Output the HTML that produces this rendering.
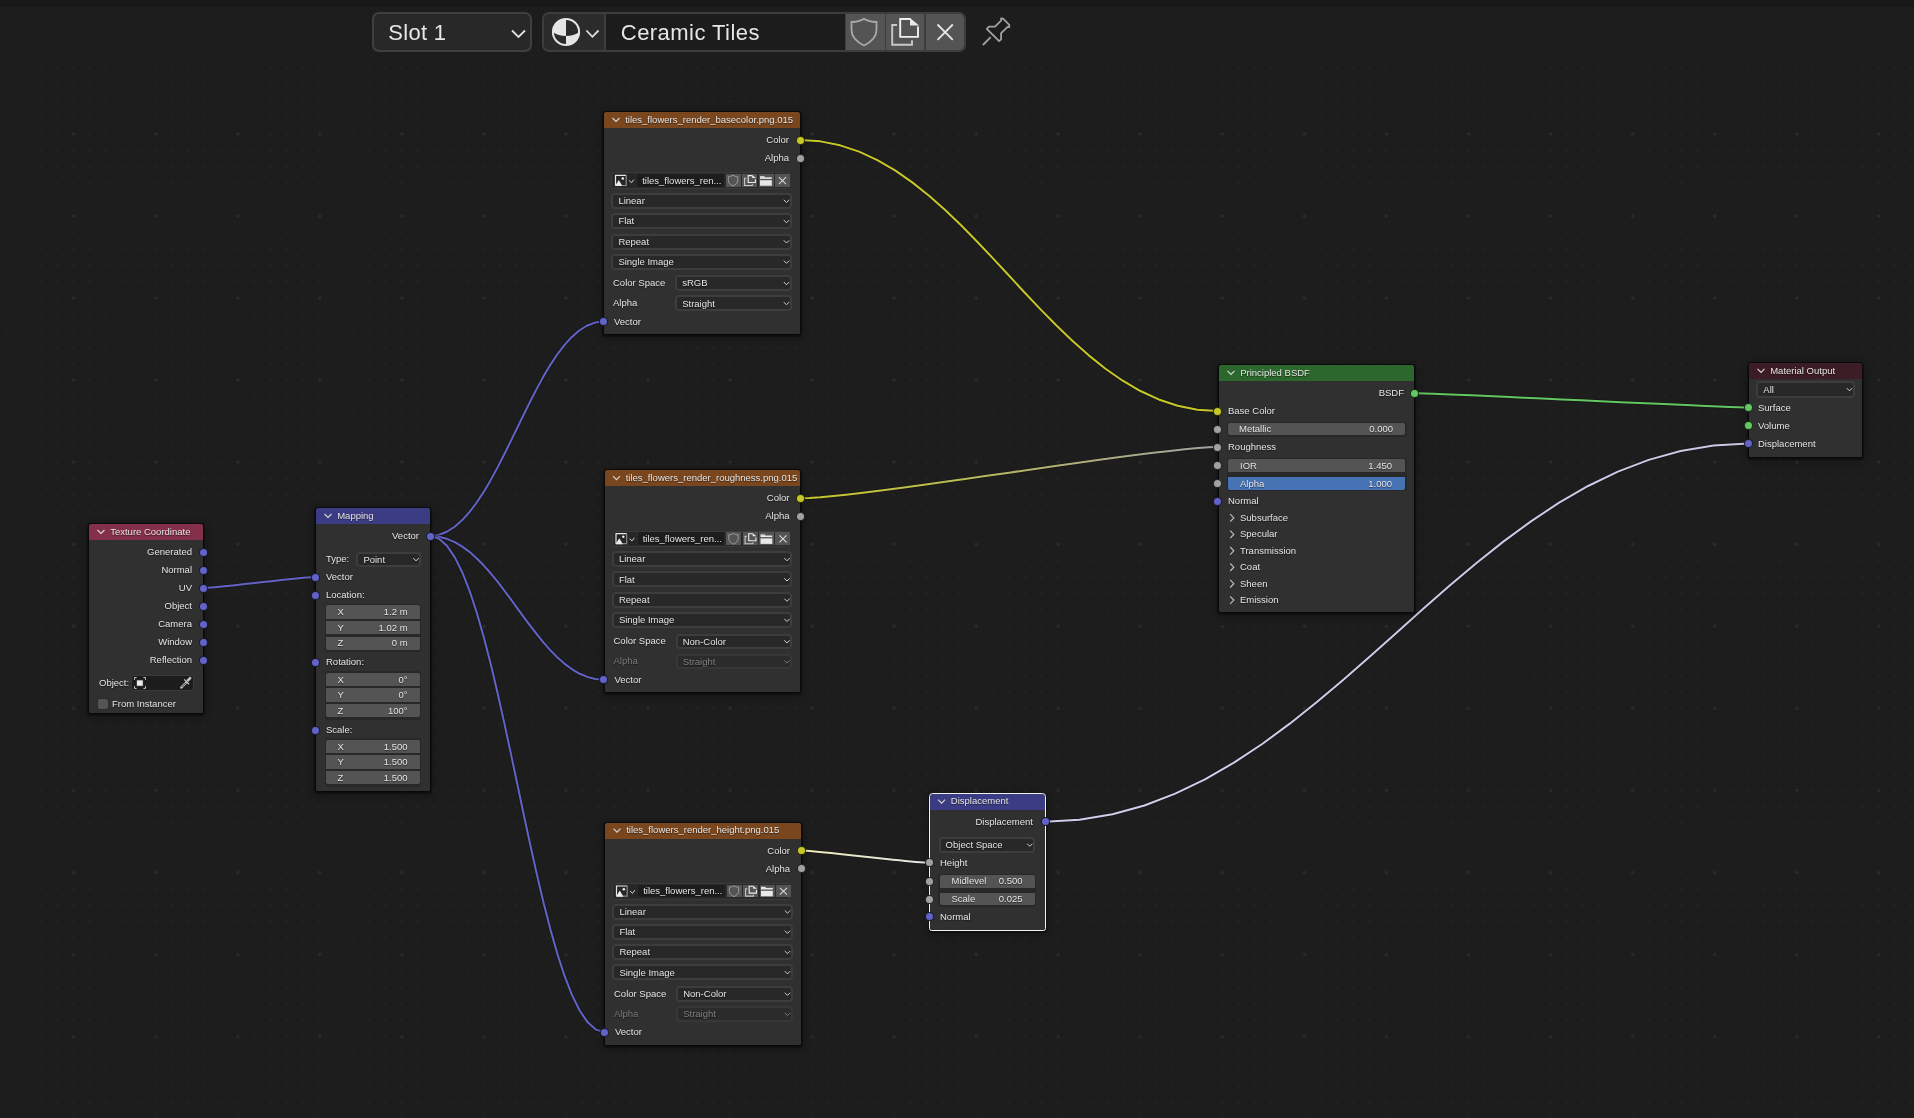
<!DOCTYPE html>
<html><head><meta charset="utf-8"><style>
html,body{margin:0;padding:0;width:1914px;height:1118px;overflow:hidden;background:#1d1d1d;font-family:"Liberation Sans", sans-serif;}
.t{position:absolute;white-space:pre;line-height:12px;height:12px;font-family:"Liberation Sans", sans-serif;}
.nd{position:absolute;background:#303030;border-radius:2.5px 2.5px 1.5px 1.5px;box-shadow:0 0 0 1px rgba(0,0,0,.4),0 1px 1px 1.5px rgba(0,0,0,.35),0 2px 8px 2px rgba(0,0,0,.3);}
.hd{border-radius:2.5px 2.5px 0 0;}
.sk{position:absolute;border-radius:50%;border:1px solid rgba(0,0,0,.75);}
.dd{position:absolute;box-sizing:border-box;background:#282828;border:2px solid #3d3d3d;border-radius:4px;}
.nf{position:absolute;box-sizing:border-box;}
.grp{position:absolute;background:#282828;border-radius:3.5px;}
.tf{position:absolute;box-sizing:border-box;background:#1c1c1c;border:1.8px solid #3a3a3a;border-radius:3.5px;}
.tf2{position:absolute;background:#1d1d1d;}
.ib{position:absolute;background:#262626;border-radius:2px 0 0 2px;}
.grp2{position:absolute;box-sizing:border-box;background:#2a2a2a;border:1.3px solid #3a3a3a;border-radius:3.5px;}
.ibtn{position:absolute;background:#545454;}
.cb{position:absolute;background:#545454;border-radius:2px;box-shadow:0 0 0 1px #2a2a2a;}
.hbox{position:absolute;border:2px solid #404040;border-radius:7px;}
.ht{position:absolute;font-size:22px;line-height:26px;color:#e6e6e6;white-space:pre;}
svg{position:absolute;left:0;top:0;}
</style></head><body>
<div style="position:absolute;left:0;top:0;width:1914px;height:7px;background:#181818"></div>
<svg width="1914" height="1118"><defs><pattern id="pd" patternUnits="userSpaceOnUse" x="-0.5" y="-0.5" width="16.41" height="16.41"><rect x="7.2" y="2.26" width="2" height="2" fill="#242424"/></pattern><pattern id="pb" patternUnits="userSpaceOnUse" x="-0.5" y="-0.5" width="82.05" height="82.05"><circle cx="74.2" cy="52.35" r="1.5" fill="#2d2d2d"/></pattern></defs><rect x="0" y="60" width="1914" height="1058" fill="url(#pd)"/><rect x="0" y="60" width="1914" height="1058" fill="url(#pb)"/></svg>
<div style="position:absolute;left:0;top:0;width:1914px;height:1118px;will-change:transform"><div class="hbox" style="left:372px;top:12px;width:156px;height:36px;background:#282828;"></div><div class="ht" style="left:388.3px;top:20px;letter-spacing:0.3px">Slot 1</div><div style="position:absolute;left:542px;top:12px;width:424px;height:40px;background:#3d3d3d;border-radius:7px"></div><div style="position:absolute;left:544px;top:14px;width:60px;height:36px;background:#2b2b2b;border-radius:5px 0 0 5px"></div><div style="position:absolute;left:605.5px;top:14px;width:239px;height:36px;background:#1c1c1c;"></div><div class="ht" style="left:620.8px;top:19.8px;letter-spacing:0.45px">Ceramic Tiles</div><div style="position:absolute;left:846px;top:14px;width:38.5px;height:36px;background:#545454;"></div><div style="position:absolute;left:885.8px;top:14px;width:38.6px;height:36px;background:#545454;"></div><div style="position:absolute;left:925.6px;top:14px;width:38.4px;height:36px;background:#545454;border-radius:0 5px 5px 0"></div></div>
<svg width="1914" height="1118"><polyline points="512,30.5 518.5,37 525,30.5" fill="none" stroke="#e0e0e0" stroke-width="1.8"/><polyline points="586.4,30.5 592.4,36.8 598.5,30.5" fill="none" stroke="#e0e0e0" stroke-width="1.8"/><g transform="translate(566,32)"><path d="M-13.1,0 A13.1,13.1 0 0 1 0,-13.1 L0,4.1 C-5,4.1 -10,2.5 -13.1,0 Z" fill="#e6e6e6"/><path d="M13.1,0 A13.1,13.1 0 0 1 0,13.1 L0,4.1 C5,4.1 10,2.5 13.1,0 Z" fill="#e6e6e6"/><circle cx="0" cy="0" r="13.1" fill="none" stroke="#e6e6e6" stroke-width="2"/></g><path d="M864,18.8 C860,21.5 855,22 851.5,22 L851.5,30 C851.5,37 857,42 864,45.5 C871,42 876.5,37 876.5,30 L876.5,22 C873,22 868,21.5 864,18.8 Z" fill="none" stroke="#a8a8a8" stroke-width="1.8"/><path d="M897,25 L892.2,25 L892.2,44.7 L912,44.7 L912,40.3" fill="none" stroke="#c8c8c8" stroke-width="1.9"/><path d="M918,26.5 L918,36.9 L900.2,36.9 L900.2,19 L910.8,19" fill="none" stroke="#f0f0f0" stroke-width="1.9"/><path d="M910,18 L919.2,25.6 L910,25.6 Z" fill="#e8e8e8"/><path d="M937.5,24.5 L952.8,39.8 M952.8,24.5 L937.5,39.8" stroke="#e6e6e6" stroke-width="1.8"/><g stroke="#a2a2a2" stroke-width="1.8" fill="none" stroke-linejoin="round"><path d="M1001.1,20.6 L1001.1,18.5 L1003.1,18.6 L1009.3,24.8 L1009.3,27.1 L1007.6,26.9 L1001.1,33.2 L1001.1,39.3 L999.1,41.1 L986.8,28.8 L989,26.6 L995,26.6 Z"/><path d="M990.7,37.2 L982.9,45"/></g></svg>
<svg width="1914" height="1118"><path d="M203.10,588.00 L205.12,587.94 L207.83,587.78 L211.17,587.53 L215.08,587.19 L219.49,586.77 L224.34,586.28 L229.58,585.74 L235.12,585.15 L240.92,584.52 L246.91,583.86 L253.02,583.19 L259.20,582.50 L265.38,581.81 L271.49,581.14 L277.48,580.48 L283.28,579.85 L288.82,579.26 L294.06,578.72 L298.91,578.23 L303.32,577.81 L307.23,577.47 L310.57,577.22 L313.28,577.06 L315.30,577.00" fill="none" stroke="#101010" stroke-opacity=".6" stroke-linejoin="round" stroke-width="3.4"/><path d="M203.10,588.00 L205.12,587.94 L207.83,587.78 L211.17,587.53 L215.08,587.19 L219.49,586.77 L224.34,586.28 L229.58,585.74 L235.12,585.15 L240.92,584.52 L246.91,583.86 L253.02,583.19 L259.20,582.50 L265.38,581.81 L271.49,581.14 L277.48,580.48 L283.28,579.85 L288.82,579.26 L294.06,578.72 L298.91,578.23 L303.32,577.81 L307.23,577.47 L310.57,577.22 L313.28,577.06 L315.30,577.00" fill="none" stroke="#6363c7" stroke-linejoin="round" stroke-width="2.0"/><path d="M430.20,536.00 L438.68,534.91 L446.84,531.78 L454.69,526.78 L462.27,520.11 L469.62,511.95 L476.75,502.48 L483.70,491.90 L490.50,480.39 L497.18,468.13 L503.77,455.31 L510.30,442.13 L516.80,428.75 L523.30,415.37 L529.83,402.19 L536.42,389.37 L543.10,377.11 L549.90,365.60 L556.85,355.02 L563.98,345.55 L571.33,337.39 L578.91,330.72 L586.76,325.72 L594.92,322.59 L603.40,321.50" fill="none" stroke="#101010" stroke-opacity=".6" stroke-linejoin="round" stroke-width="3.4"/><path d="M430.20,536.00 L438.68,534.91 L446.84,531.78 L454.69,526.78 L462.27,520.11 L469.62,511.95 L476.75,502.48 L483.70,491.90 L490.50,480.39 L497.18,468.13 L503.77,455.31 L510.30,442.13 L516.80,428.75 L523.30,415.37 L529.83,402.19 L536.42,389.37 L543.10,377.11 L549.90,365.60 L556.85,355.02 L563.98,345.55 L571.33,337.39 L578.91,330.72 L586.76,325.72 L594.92,322.59 L603.40,321.50" fill="none" stroke="#6363c7" stroke-linejoin="round" stroke-width="2.0"/><path d="M430.20,536.00 L438.71,536.73 L446.89,538.83 L454.76,542.17 L462.37,546.64 L469.73,552.11 L476.88,558.45 L483.85,565.54 L490.67,573.26 L497.37,581.47 L503.98,590.05 L510.53,598.89 L517.05,607.85 L523.57,616.81 L530.12,625.65 L536.73,634.23 L543.43,642.44 L550.25,650.16 L557.22,657.25 L564.37,663.59 L571.73,669.06 L579.34,673.53 L587.21,676.87 L595.39,678.97 L603.90,679.70" fill="none" stroke="#101010" stroke-opacity=".6" stroke-linejoin="round" stroke-width="3.4"/><path d="M430.20,536.00 L438.71,536.73 L446.89,538.83 L454.76,542.17 L462.37,546.64 L469.73,552.11 L476.88,558.45 L483.85,565.54 L490.67,573.26 L497.37,581.47 L503.98,590.05 L510.53,598.89 L517.05,607.85 L523.57,616.81 L530.12,625.65 L536.73,634.23 L543.43,642.44 L550.25,650.16 L557.22,657.25 L564.37,663.59 L571.73,669.06 L579.34,673.53 L587.21,676.87 L595.39,678.97 L603.90,679.70" fill="none" stroke="#6363c7" stroke-linejoin="round" stroke-width="2.0"/><path d="M430.20,536.00 L438.73,538.51 L446.93,545.76 L454.83,557.32 L462.46,572.75 L469.84,591.62 L477.02,613.52 L484.01,637.99 L490.85,664.62 L497.57,692.97 L504.19,722.61 L510.76,753.12 L517.30,784.05 L523.84,814.98 L530.41,845.49 L537.03,875.13 L543.75,903.48 L550.59,930.11 L557.58,954.58 L564.76,976.48 L572.14,995.35 L579.77,1010.78 L587.67,1022.34 L595.87,1029.59 L604.40,1032.10" fill="none" stroke="#101010" stroke-opacity=".6" stroke-linejoin="round" stroke-width="3.4"/><path d="M430.20,536.00 L438.73,538.51 L446.93,545.76 L454.83,557.32 L462.46,572.75 L469.84,591.62 L477.02,613.52 L484.01,637.99 L490.85,664.62 L497.57,692.97 L504.19,722.61 L510.76,753.12 L517.30,784.05 L523.84,814.98 L530.41,845.49 L537.03,875.13 L543.75,903.48 L550.59,930.11 L557.58,954.58 L564.76,976.48 L572.14,995.35 L579.77,1010.78 L587.67,1022.34 L595.87,1029.59 L604.40,1032.10" fill="none" stroke="#6363c7" stroke-linejoin="round" stroke-width="2.0"/><path d="M800.00,140.00 L820.47,141.37 L840.14,145.33 L859.08,151.65 L877.37,160.08 L895.08,170.40 L912.28,182.36 L929.05,195.73 L945.46,210.29 L961.57,225.78 L977.47,241.98 L993.22,258.65 L1008.90,275.55 L1024.58,292.45 L1040.33,309.12 L1056.23,325.32 L1072.34,340.81 L1088.75,355.37 L1105.52,368.74 L1122.72,380.70 L1140.43,391.02 L1158.72,399.45 L1177.66,405.77 L1197.33,409.73 L1217.80,411.10" fill="none" stroke="#101010" stroke-opacity=".6" stroke-linejoin="round" stroke-width="3.4"/><path d="M800.00,140.00 L820.47,141.37 L840.14,145.33 L859.08,151.65 L877.37,160.08 L895.08,170.40 L912.28,182.36 L929.05,195.73 L945.46,210.29 L961.57,225.78 L977.47,241.98 L993.22,258.65 L1008.90,275.55 L1024.58,292.45 L1040.33,309.12 L1056.23,325.32 L1072.34,340.81 L1088.75,355.37 L1105.52,368.74 L1122.72,380.70 L1140.43,391.02 L1158.72,399.45 L1177.66,405.77 L1197.33,409.73 L1217.80,411.10" fill="none" stroke="#c7c72a" stroke-linejoin="round" stroke-width="2.0"/><linearGradient id="g5" gradientUnits="userSpaceOnUse" x1="800.5" y1="498.2" x2="1217.8" y2="447.1"><stop offset="0" stop-color="#c7c72a"/><stop offset="1" stop-color="#a2a2a2"/></linearGradient><path d="M800.50,498.20 L809.35,497.94 L820.42,497.19 L833.52,496.00 L848.44,494.41 L864.99,492.47 L882.95,490.22 L902.13,487.69 L922.32,484.95 L943.32,482.03 L964.92,478.98 L986.94,475.84 L1009.15,472.65 L1031.36,469.46 L1053.38,466.32 L1074.98,463.27 L1095.98,460.35 L1116.17,457.61 L1135.35,455.08 L1153.31,452.83 L1169.86,450.89 L1184.78,449.30 L1197.88,448.11 L1208.95,447.36 L1217.80,447.10" fill="none" stroke="#101010" stroke-opacity=".6" stroke-linejoin="round" stroke-width="3.4"/><path d="M800.50,498.20 L809.35,497.94 L820.42,497.19 L833.52,496.00 L848.44,494.41 L864.99,492.47 L882.95,490.22 L902.13,487.69 L922.32,484.95 L943.32,482.03 L964.92,478.98 L986.94,475.84 L1009.15,472.65 L1031.36,469.46 L1053.38,466.32 L1074.98,463.27 L1095.98,460.35 L1116.17,457.61 L1135.35,455.08 L1153.31,452.83 L1169.86,450.89 L1184.78,449.30 L1197.88,448.11 L1208.95,447.36 L1217.80,447.10" fill="none" stroke="url(#g5)" stroke-linejoin="round" stroke-width="2.0"/><linearGradient id="g6" gradientUnits="userSpaceOnUse" x1="801" y1="850.6" x2="929.5" y2="862.8"><stop offset="0" stop-color="#eaeab8"/><stop offset="1" stop-color="#e4e4e4"/></linearGradient><path d="M801.00,850.60 L803.26,850.66 L806.32,850.84 L810.12,851.12 L814.59,851.50 L819.63,851.97 L825.20,852.51 L831.20,853.11 L837.57,853.76 L844.23,854.46 L851.12,855.19 L858.15,855.94 L865.25,856.70 L872.35,857.46 L879.38,858.21 L886.27,858.94 L892.93,859.64 L899.30,860.29 L905.30,860.89 L910.87,861.43 L915.91,861.90 L920.38,862.28 L924.18,862.56 L927.24,862.74 L929.50,862.80" fill="none" stroke="#101010" stroke-opacity=".6" stroke-linejoin="round" stroke-width="3.4"/><path d="M801.00,850.60 L803.26,850.66 L806.32,850.84 L810.12,851.12 L814.59,851.50 L819.63,851.97 L825.20,852.51 L831.20,853.11 L837.57,853.76 L844.23,854.46 L851.12,855.19 L858.15,855.94 L865.25,856.70 L872.35,857.46 L879.38,858.21 L886.27,858.94 L892.93,859.64 L899.30,860.29 L905.30,860.89 L910.87,861.43 L915.91,861.90 L920.38,862.28 L924.18,862.56 L927.24,862.74 L929.50,862.80" fill="none" stroke="url(#g6)" stroke-linejoin="round" stroke-width="2.0"/><linearGradient id="g7" gradientUnits="userSpaceOnUse" x1="1045" y1="821.7" x2="1748.1" y2="443.6"><stop offset="0" stop-color="#cfcfee"/><stop offset="1" stop-color="#c8c8e6"/></linearGradient><path d="M1045.00,821.70 L1079.44,819.79 L1112.54,814.26 L1144.42,805.45 L1175.20,793.69 L1205.01,779.31 L1233.96,762.62 L1262.18,743.97 L1289.78,723.67 L1316.90,702.07 L1343.65,679.47 L1370.16,656.23 L1396.55,632.65 L1422.94,609.07 L1449.45,585.83 L1476.20,563.23 L1503.32,541.63 L1530.92,521.33 L1559.14,502.68 L1588.09,485.99 L1617.90,471.61 L1648.68,459.85 L1680.56,451.04 L1713.66,445.51 L1748.10,443.60" fill="none" stroke="#101010" stroke-opacity=".6" stroke-linejoin="round" stroke-width="3.4"/><path d="M1045.00,821.70 L1079.44,819.79 L1112.54,814.26 L1144.42,805.45 L1175.20,793.69 L1205.01,779.31 L1233.96,762.62 L1262.18,743.97 L1289.78,723.67 L1316.90,702.07 L1343.65,679.47 L1370.16,656.23 L1396.55,632.65 L1422.94,609.07 L1449.45,585.83 L1476.20,563.23 L1503.32,541.63 L1530.92,521.33 L1559.14,502.68 L1588.09,485.99 L1617.90,471.61 L1648.68,459.85 L1680.56,451.04 L1713.66,445.51 L1748.10,443.60" fill="none" stroke="url(#g7)" stroke-linejoin="round" stroke-width="2.0"/><path d="M1414.70,393.10 L1418.30,393.17 L1424.58,393.39 L1433.31,393.72 L1444.23,394.17 L1457.10,394.73 L1471.69,395.37 L1487.74,396.08 L1505.00,396.86 L1523.25,397.69 L1542.23,398.55 L1561.69,399.45 L1581.40,400.35 L1601.11,401.25 L1620.57,402.15 L1639.55,403.01 L1657.80,403.84 L1675.06,404.62 L1691.11,405.33 L1705.70,405.97 L1718.57,406.53 L1729.49,406.98 L1738.22,407.31 L1744.50,407.53 L1748.10,407.60" fill="none" stroke="#101010" stroke-opacity=".6" stroke-linejoin="round" stroke-width="3.4"/><path d="M1414.70,393.10 L1418.30,393.17 L1424.58,393.39 L1433.31,393.72 L1444.23,394.17 L1457.10,394.73 L1471.69,395.37 L1487.74,396.08 L1505.00,396.86 L1523.25,397.69 L1542.23,398.55 L1561.69,399.45 L1581.40,400.35 L1601.11,401.25 L1620.57,402.15 L1639.55,403.01 L1657.80,403.84 L1675.06,404.62 L1691.11,405.33 L1705.70,405.97 L1718.57,406.53 L1729.49,406.98 L1738.22,407.31 L1744.50,407.53 L1748.10,407.60" fill="none" stroke="#63c763" stroke-linejoin="round" stroke-width="2.0"/></svg>
<div style="position:absolute;left:0;top:0;width:1914px;height:1118px;will-change:transform"><div class="nd" style="left:89px;top:524px;width:114px;height:189px;"><div class="hd" style="height:16px;background:#85304a"></div></div><div class="t" style="left:110.2px;top:525.6px;font-size:9.5px;color:#e5e5e5;text-shadow:0 1px 1px rgba(0,0,0,.55);">Texture Coordinate</div><div class="t" style="right:1722px;top:546.2px;font-size:9.5px;color:#e5e5e5;text-shadow:0 1px 1px rgba(0,0,0,.55);">Generated</div><div class="sk" style="left:198.60px;top:547.50px;width:7.0px;height:7.0px;background:#6363c7"></div><div class="t" style="right:1722px;top:564.2px;font-size:9.5px;color:#e5e5e5;text-shadow:0 1px 1px rgba(0,0,0,.55);">Normal</div><div class="sk" style="left:198.60px;top:565.50px;width:7.0px;height:7.0px;background:#6363c7"></div><div class="t" style="right:1722px;top:582.2px;font-size:9.5px;color:#e5e5e5;text-shadow:0 1px 1px rgba(0,0,0,.55);">UV</div><div class="sk" style="left:198.60px;top:583.50px;width:7.0px;height:7.0px;background:#6363c7"></div><div class="t" style="right:1722px;top:600.2px;font-size:9.5px;color:#e5e5e5;text-shadow:0 1px 1px rgba(0,0,0,.55);">Object</div><div class="sk" style="left:198.60px;top:601.50px;width:7.0px;height:7.0px;background:#6363c7"></div><div class="t" style="right:1722px;top:618.2px;font-size:9.5px;color:#e5e5e5;text-shadow:0 1px 1px rgba(0,0,0,.55);">Camera</div><div class="sk" style="left:198.60px;top:619.50px;width:7.0px;height:7.0px;background:#6363c7"></div><div class="t" style="right:1722px;top:636.2px;font-size:9.5px;color:#e5e5e5;text-shadow:0 1px 1px rgba(0,0,0,.55);">Window</div><div class="sk" style="left:198.60px;top:637.50px;width:7.0px;height:7.0px;background:#6363c7"></div><div class="t" style="right:1722px;top:654.2px;font-size:9.5px;color:#e5e5e5;text-shadow:0 1px 1px rgba(0,0,0,.55);">Reflection</div><div class="sk" style="left:198.60px;top:655.50px;width:7.0px;height:7.0px;background:#6363c7"></div><div class="t" style="left:99px;top:677.2px;font-size:9.5px;color:#e5e5e5;text-shadow:0 1px 1px rgba(0,0,0,.55);">Object:</div><div class="tf" style="left:130.6px;top:675.1px;width:63.7px;height:15.8px"></div><div class="cb" style="left:98px;top:699px;width:10px;height:10px"></div><div class="t" style="left:112px;top:698.2px;font-size:9.5px;color:#e5e5e5;text-shadow:0 1px 1px rgba(0,0,0,.55);">From Instancer</div><div class="nd" style="left:316px;top:508px;width:113.8px;height:282.5px;"><div class="hd" style="height:16px;background:#3c3c84"></div></div><div class="t" style="left:337.2px;top:509.6px;font-size:9.5px;color:#e5e5e5;text-shadow:0 1px 1px rgba(0,0,0,.55);">Mapping</div><div class="t" style="right:1495px;top:530.2px;font-size:9.5px;color:#e5e5e5;text-shadow:0 1px 1px rgba(0,0,0,.55);">Vector</div><div class="sk" style="left:425.70px;top:531.50px;width:7.0px;height:7.0px;background:#6363c7"></div><div class="t" style="left:326px;top:553.2px;font-size:9.5px;color:#e5e5e5;text-shadow:0 1px 1px rgba(0,0,0,.55);">Type:</div><div class="dd" style="left:356.4px;top:551.5px;width:64.8px;height:15.6px;"></div><div class="t" style="left:363.4px;top:553.5px;font-size:9.5px;color:#e5e5e5;text-shadow:0 1px 1px rgba(0,0,0,.55);">Point</div><div class="t" style="left:326px;top:571.2px;font-size:9.5px;color:#e5e5e5;text-shadow:0 1px 1px rgba(0,0,0,.55);">Vector</div><div class="sk" style="left:310.80px;top:572.50px;width:7.0px;height:7.0px;background:#6363c7"></div><div class="t" style="left:326px;top:589.2px;font-size:9.5px;color:#e5e5e5;text-shadow:0 1px 1px rgba(0,0,0,.55);">Location:</div><div class="sk" style="left:310.80px;top:590.50px;width:7.0px;height:7.0px;background:#6363c7"></div><div class="t" style="left:326px;top:656.2px;font-size:9.5px;color:#e5e5e5;text-shadow:0 1px 1px rgba(0,0,0,.55);">Rotation:</div><div class="sk" style="left:310.80px;top:657.50px;width:7.0px;height:7.0px;background:#6363c7"></div><div class="t" style="left:326px;top:724.2px;font-size:9.5px;color:#e5e5e5;text-shadow:0 1px 1px rgba(0,0,0,.55);">Scale:</div><div class="sk" style="left:310.80px;top:725.50px;width:7.0px;height:7.0px;background:#6363c7"></div><div class="grp" style="left:324.9px;top:603.8px;width:96.5px;height:48.6px;border-radius:3px"></div><div class="nf" style="left:326.3px;top:605.40px;width:93.8px;height:13.2px;background:#545454;border-radius:2px 2px 0 0"></div><div class="t" style="left:337.5px;top:606.2px;font-size:9.5px;color:#e5e5e5;text-shadow:0 1px 1px rgba(0,0,0,.55);">X</div><div class="t" style="right:1506.4px;top:606.2px;font-size:9.5px;color:#e5e5e5;text-shadow:0 1px 1px rgba(0,0,0,.55);">1.2 m</div><div class="nf" style="left:326.3px;top:620.95px;width:93.8px;height:13.2px;background:#545454;border-radius:0"></div><div class="t" style="left:337.5px;top:621.8px;font-size:9.5px;color:#e5e5e5;text-shadow:0 1px 1px rgba(0,0,0,.55);">Y</div><div class="t" style="right:1506.4px;top:621.8px;font-size:9.5px;color:#e5e5e5;text-shadow:0 1px 1px rgba(0,0,0,.55);">1.02 m</div><div class="nf" style="left:326.3px;top:636.50px;width:93.8px;height:13.2px;background:#545454;border-radius:0 0 2px 2px"></div><div class="t" style="left:337.5px;top:637.3px;font-size:9.5px;color:#e5e5e5;text-shadow:0 1px 1px rgba(0,0,0,.55);">Z</div><div class="t" style="right:1506.4px;top:637.3px;font-size:9.5px;color:#e5e5e5;text-shadow:0 1px 1px rgba(0,0,0,.55);">0 m</div><div class="grp" style="left:324.9px;top:671.3px;width:96.5px;height:48.6px;border-radius:3px"></div><div class="nf" style="left:326.3px;top:672.90px;width:93.8px;height:13.2px;background:#545454;border-radius:2px 2px 0 0"></div><div class="t" style="left:337.5px;top:673.7px;font-size:9.5px;color:#e5e5e5;text-shadow:0 1px 1px rgba(0,0,0,.55);">X</div><div class="t" style="right:1506.4px;top:673.7px;font-size:9.5px;color:#e5e5e5;text-shadow:0 1px 1px rgba(0,0,0,.55);">0°</div><div class="nf" style="left:326.3px;top:688.45px;width:93.8px;height:13.2px;background:#545454;border-radius:0"></div><div class="t" style="left:337.5px;top:689.2px;font-size:9.5px;color:#e5e5e5;text-shadow:0 1px 1px rgba(0,0,0,.55);">Y</div><div class="t" style="right:1506.4px;top:689.2px;font-size:9.5px;color:#e5e5e5;text-shadow:0 1px 1px rgba(0,0,0,.55);">0°</div><div class="nf" style="left:326.3px;top:704.00px;width:93.8px;height:13.2px;background:#545454;border-radius:0 0 2px 2px"></div><div class="t" style="left:337.5px;top:704.8px;font-size:9.5px;color:#e5e5e5;text-shadow:0 1px 1px rgba(0,0,0,.55);">Z</div><div class="t" style="right:1506.4px;top:704.8px;font-size:9.5px;color:#e5e5e5;text-shadow:0 1px 1px rgba(0,0,0,.55);">100°</div><div class="grp" style="left:324.9px;top:738.3px;width:96.5px;height:48.6px;border-radius:3px"></div><div class="nf" style="left:326.3px;top:739.90px;width:93.8px;height:13.2px;background:#545454;border-radius:2px 2px 0 0"></div><div class="t" style="left:337.5px;top:740.7px;font-size:9.5px;color:#e5e5e5;text-shadow:0 1px 1px rgba(0,0,0,.55);">X</div><div class="t" style="right:1506.4px;top:740.7px;font-size:9.5px;color:#e5e5e5;text-shadow:0 1px 1px rgba(0,0,0,.55);">1.500</div><div class="nf" style="left:326.3px;top:755.45px;width:93.8px;height:13.2px;background:#545454;border-radius:0"></div><div class="t" style="left:337.5px;top:756.2px;font-size:9.5px;color:#e5e5e5;text-shadow:0 1px 1px rgba(0,0,0,.55);">Y</div><div class="t" style="right:1506.4px;top:756.2px;font-size:9.5px;color:#e5e5e5;text-shadow:0 1px 1px rgba(0,0,0,.55);">1.500</div><div class="nf" style="left:326.3px;top:771.00px;width:93.8px;height:13.2px;background:#545454;border-radius:0 0 2px 2px"></div><div class="t" style="left:337.5px;top:771.8px;font-size:9.5px;color:#e5e5e5;text-shadow:0 1px 1px rgba(0,0,0,.55);">Z</div><div class="t" style="right:1506.4px;top:771.8px;font-size:9.5px;color:#e5e5e5;text-shadow:0 1px 1px rgba(0,0,0,.55);">1.500</div><div class="nd" style="left:604px;top:112px;width:195.5px;height:222px;"><div class="hd" style="height:16px;background:#79461e"></div></div><div class="t" style="left:625.2px;top:113.6px;font-size:9.5px;color:#e5e5e5;text-shadow:0 1px 1px rgba(0,0,0,.55);">tiles_flowers_render_basecolor.png.015</div><div class="t" style="right:1125px;top:134.2px;font-size:9.5px;color:#e5e5e5;text-shadow:0 1px 1px rgba(0,0,0,.55);">Color</div><div class="sk" style="left:795.50px;top:135.50px;width:7.0px;height:7.0px;background:#c7c729"></div><div class="t" style="right:1125px;top:152.2px;font-size:9.5px;color:#e5e5e5;text-shadow:0 1px 1px rgba(0,0,0,.55);">Alpha</div><div class="sk" style="left:795.50px;top:153.50px;width:7.0px;height:7.0px;background:#a1a1a1"></div><div class="grp2" style="left:611.4px;top:172.4px;width:178.6px;height:16.5px"></div><div class="ib" style="left:613.4px;top:174px;width:22.3px;height:12.9px"></div><div class="tf2" style="left:637.3px;top:174.2px;width:86.4px;height:12.5px"></div><div class="t" style="left:642.2px;top:174.8px;font-size:9.5px;color:#e5e5e5;text-shadow:0 1px 1px rgba(0,0,0,.55);">tiles_flowers_ren...</div><div class="ibtn" style="left:725.80px;top:174px;width:15.1px;height:12.9px"></div><div class="ibtn" style="left:742.15px;top:174px;width:15.1px;height:12.9px"></div><div class="ibtn" style="left:758.50px;top:174px;width:15.1px;height:12.9px"></div><div class="ibtn" style="left:774.85px;top:174px;width:15.1px;height:12.9px"></div><div class="dd" style="left:611.4px;top:193.0px;width:180.3px;height:16px;"></div><div class="t" style="left:618.4px;top:195.2px;font-size:9.5px;color:#e5e5e5;text-shadow:0 1px 1px rgba(0,0,0,.55);">Linear</div><div class="dd" style="left:611.4px;top:213.25px;width:180.3px;height:16px;"></div><div class="t" style="left:618.4px;top:215.4px;font-size:9.5px;color:#e5e5e5;text-shadow:0 1px 1px rgba(0,0,0,.55);">Flat</div><div class="dd" style="left:611.4px;top:233.5px;width:180.3px;height:16px;"></div><div class="t" style="left:618.4px;top:235.7px;font-size:9.5px;color:#e5e5e5;text-shadow:0 1px 1px rgba(0,0,0,.55);">Repeat</div><div class="dd" style="left:611.4px;top:253.75px;width:180.3px;height:16px;"></div><div class="t" style="left:618.4px;top:255.9px;font-size:9.5px;color:#e5e5e5;text-shadow:0 1px 1px rgba(0,0,0,.55);">Single Image</div><div class="t" style="left:613px;top:277.2px;font-size:9.5px;color:#e5e5e5;text-shadow:0 1px 1px rgba(0,0,0,.55);">Color Space</div><div class="dd" style="left:675.2px;top:275.3px;width:116.5px;height:15.8px;"></div><div class="t" style="left:682.2px;top:277.4px;font-size:9.5px;color:#e5e5e5;text-shadow:0 1px 1px rgba(0,0,0,.55);">sRGB</div><div class="t" style="left:613px;top:297.2px;font-size:9.5px;color:#e5e5e5;text-shadow:0 1px 1px rgba(0,0,0,.55);">Alpha</div><div class="dd" style="left:675.2px;top:295.4px;width:116.5px;height:15.8px;"></div><div class="t" style="left:682.2px;top:297.5px;font-size:9.5px;color:#e5e5e5;text-shadow:0 1px 1px rgba(0,0,0,.55);">Straight</div><div class="t" style="left:614px;top:315.7px;font-size:9.5px;color:#e5e5e5;text-shadow:0 1px 1px rgba(0,0,0,.55);">Vector</div><div class="sk" style="left:598.90px;top:317.00px;width:7.0px;height:7.0px;background:#6363c7"></div><div class="nd" style="left:604.5px;top:470.2px;width:195.5px;height:222px;"><div class="hd" style="height:16px;background:#79461e"></div></div><div class="t" style="left:625.7px;top:471.8px;font-size:9.5px;color:#e5e5e5;text-shadow:0 1px 1px rgba(0,0,0,.55);">tiles_flowers_render_roughness.png.015</div><div class="t" style="right:1124.5px;top:492.4px;font-size:9.5px;color:#e5e5e5;text-shadow:0 1px 1px rgba(0,0,0,.55);">Color</div><div class="sk" style="left:796.00px;top:493.70px;width:7.0px;height:7.0px;background:#c7c729"></div><div class="t" style="right:1124.5px;top:510.4px;font-size:9.5px;color:#e5e5e5;text-shadow:0 1px 1px rgba(0,0,0,.55);">Alpha</div><div class="sk" style="left:796.00px;top:511.70px;width:7.0px;height:7.0px;background:#a1a1a1"></div><div class="grp2" style="left:611.9px;top:530.6px;width:178.6px;height:16.5px"></div><div class="ib" style="left:613.9px;top:532.2px;width:22.3px;height:12.9px"></div><div class="tf2" style="left:637.8px;top:532.4000000000001px;width:86.4px;height:12.5px"></div><div class="t" style="left:642.7px;top:533.0px;font-size:9.5px;color:#e5e5e5;text-shadow:0 1px 1px rgba(0,0,0,.55);">tiles_flowers_ren...</div><div class="ibtn" style="left:726.30px;top:532.2px;width:15.1px;height:12.9px"></div><div class="ibtn" style="left:742.65px;top:532.2px;width:15.1px;height:12.9px"></div><div class="ibtn" style="left:759.00px;top:532.2px;width:15.1px;height:12.9px"></div><div class="ibtn" style="left:775.35px;top:532.2px;width:15.1px;height:12.9px"></div><div class="dd" style="left:611.9px;top:551.2px;width:180.3px;height:16px;"></div><div class="t" style="left:618.9px;top:553.4px;font-size:9.5px;color:#e5e5e5;text-shadow:0 1px 1px rgba(0,0,0,.55);">Linear</div><div class="dd" style="left:611.9px;top:571.45px;width:180.3px;height:16px;"></div><div class="t" style="left:618.9px;top:573.7px;font-size:9.5px;color:#e5e5e5;text-shadow:0 1px 1px rgba(0,0,0,.55);">Flat</div><div class="dd" style="left:611.9px;top:591.7px;width:180.3px;height:16px;"></div><div class="t" style="left:618.9px;top:593.9px;font-size:9.5px;color:#e5e5e5;text-shadow:0 1px 1px rgba(0,0,0,.55);">Repeat</div><div class="dd" style="left:611.9px;top:611.95px;width:180.3px;height:16px;"></div><div class="t" style="left:618.9px;top:614.2px;font-size:9.5px;color:#e5e5e5;text-shadow:0 1px 1px rgba(0,0,0,.55);">Single Image</div><div class="t" style="left:613.5px;top:635.4px;font-size:9.5px;color:#e5e5e5;text-shadow:0 1px 1px rgba(0,0,0,.55);">Color Space</div><div class="dd" style="left:675.7px;top:633.5px;width:116.5px;height:15.8px;"></div><div class="t" style="left:682.7px;top:635.6px;font-size:9.5px;color:#e5e5e5;text-shadow:0 1px 1px rgba(0,0,0,.55);">Non-Color</div><div class="t" style="left:613.5px;top:655.4px;font-size:9.5px;color:#7a7a7a;text-shadow:0 1px 1px rgba(0,0,0,.55);">Alpha</div><div class="dd" style="left:675.7px;top:653.6px;width:116.5px;height:15.8px;opacity:.55;"></div><div class="t" style="left:682.7px;top:655.7px;font-size:9.5px;color:#808080;text-shadow:0 1px 1px rgba(0,0,0,.55);">Straight</div><div class="t" style="left:614.5px;top:673.9px;font-size:9.5px;color:#e5e5e5;text-shadow:0 1px 1px rgba(0,0,0,.55);">Vector</div><div class="sk" style="left:599.40px;top:675.20px;width:7.0px;height:7.0px;background:#6363c7"></div><div class="nd" style="left:605px;top:822.6px;width:195.5px;height:222px;"><div class="hd" style="height:16px;background:#79461e"></div></div><div class="t" style="left:626.2px;top:824.2px;font-size:9.5px;color:#e5e5e5;text-shadow:0 1px 1px rgba(0,0,0,.55);">tiles_flowers_render_height.png.015</div><div class="t" style="right:1124px;top:844.8px;font-size:9.5px;color:#e5e5e5;text-shadow:0 1px 1px rgba(0,0,0,.55);">Color</div><div class="sk" style="left:796.50px;top:846.10px;width:7.0px;height:7.0px;background:#c7c729"></div><div class="t" style="right:1124px;top:862.8px;font-size:9.5px;color:#e5e5e5;text-shadow:0 1px 1px rgba(0,0,0,.55);">Alpha</div><div class="sk" style="left:796.50px;top:864.10px;width:7.0px;height:7.0px;background:#a1a1a1"></div><div class="grp2" style="left:612.4px;top:883.0px;width:178.6px;height:16.5px"></div><div class="ib" style="left:614.4px;top:884.6px;width:22.3px;height:12.9px"></div><div class="tf2" style="left:638.3px;top:884.8000000000001px;width:86.4px;height:12.5px"></div><div class="t" style="left:643.2px;top:885.4px;font-size:9.5px;color:#e5e5e5;text-shadow:0 1px 1px rgba(0,0,0,.55);">tiles_flowers_ren...</div><div class="ibtn" style="left:726.80px;top:884.6px;width:15.1px;height:12.9px"></div><div class="ibtn" style="left:743.15px;top:884.6px;width:15.1px;height:12.9px"></div><div class="ibtn" style="left:759.50px;top:884.6px;width:15.1px;height:12.9px"></div><div class="ibtn" style="left:775.85px;top:884.6px;width:15.1px;height:12.9px"></div><div class="dd" style="left:612.4px;top:903.6px;width:180.3px;height:16px;"></div><div class="t" style="left:619.4px;top:905.8px;font-size:9.5px;color:#e5e5e5;text-shadow:0 1px 1px rgba(0,0,0,.55);">Linear</div><div class="dd" style="left:612.4px;top:923.85px;width:180.3px;height:16px;"></div><div class="t" style="left:619.4px;top:926.1px;font-size:9.5px;color:#e5e5e5;text-shadow:0 1px 1px rgba(0,0,0,.55);">Flat</div><div class="dd" style="left:612.4px;top:944.1px;width:180.3px;height:16px;"></div><div class="t" style="left:619.4px;top:946.3px;font-size:9.5px;color:#e5e5e5;text-shadow:0 1px 1px rgba(0,0,0,.55);">Repeat</div><div class="dd" style="left:612.4px;top:964.35px;width:180.3px;height:16px;"></div><div class="t" style="left:619.4px;top:966.6px;font-size:9.5px;color:#e5e5e5;text-shadow:0 1px 1px rgba(0,0,0,.55);">Single Image</div><div class="t" style="left:614px;top:987.8px;font-size:9.5px;color:#e5e5e5;text-shadow:0 1px 1px rgba(0,0,0,.55);">Color Space</div><div class="dd" style="left:676.2px;top:985.9000000000001px;width:116.5px;height:15.8px;"></div><div class="t" style="left:683.2px;top:988.0px;font-size:9.5px;color:#e5e5e5;text-shadow:0 1px 1px rgba(0,0,0,.55);">Non-Color</div><div class="t" style="left:614px;top:1007.8px;font-size:9.5px;color:#7a7a7a;text-shadow:0 1px 1px rgba(0,0,0,.55);">Alpha</div><div class="dd" style="left:676.2px;top:1006.0px;width:116.5px;height:15.8px;opacity:.55;"></div><div class="t" style="left:683.2px;top:1008.1px;font-size:9.5px;color:#808080;text-shadow:0 1px 1px rgba(0,0,0,.55);">Straight</div><div class="t" style="left:615px;top:1026.3px;font-size:9.5px;color:#e5e5e5;text-shadow:0 1px 1px rgba(0,0,0,.55);">Vector</div><div class="sk" style="left:599.90px;top:1027.60px;width:7.0px;height:7.0px;background:#6363c7"></div><div class="nd" style="left:1219px;top:365px;width:195px;height:247px;"><div class="hd" style="height:16px;background:#2c672d"></div></div><div class="t" style="left:1240.2px;top:366.6px;font-size:9.5px;color:#e5e5e5;text-shadow:0 1px 1px rgba(0,0,0,.55);">Principled BSDF</div><div class="t" style="right:510px;top:386.7px;font-size:9.5px;color:#e5e5e5;text-shadow:0 1px 1px rgba(0,0,0,.55);">BSDF</div><div class="sk" style="left:1410.20px;top:388.60px;width:7.0px;height:7.0px;background:#63c763"></div><div class="t" style="left:1228px;top:405.2px;font-size:9.5px;color:#e5e5e5;text-shadow:0 1px 1px rgba(0,0,0,.55);">Base Color</div><div class="sk" style="left:1213.30px;top:406.60px;width:7.0px;height:7.0px;background:#c7c729"></div><div class="grp" style="left:1226.5px;top:421.5px;width:180px;height:15px"></div><div class="nf" style="left:1228px;top:423px;width:177px;height:12px;background:#545454;border-radius:2px"></div><div class="t" style="left:1239px;top:423.2px;font-size:9.5px;color:#e5e5e5;text-shadow:0 1px 1px rgba(0,0,0,.55);">Metallic</div><div class="t" style="right:521px;top:423.2px;font-size:9.5px;color:#e5e5e5;text-shadow:0 1px 1px rgba(0,0,0,.55);">0.000</div><div class="sk" style="left:1213.30px;top:424.60px;width:7.0px;height:7.0px;background:#a1a1a1"></div><div class="t" style="left:1228px;top:441.2px;font-size:9.5px;color:#e5e5e5;text-shadow:0 1px 1px rgba(0,0,0,.55);">Roughness</div><div class="sk" style="left:1213.30px;top:442.50px;width:7.0px;height:7.0px;background:#a1a1a1"></div><div class="grp" style="left:1226.5px;top:457.5px;width:180px;height:33.5px"></div><div class="nf" style="left:1228px;top:459px;width:177px;height:13px;background:#545454;border-radius:2px 2px 0 0"></div><div class="t" style="left:1240px;top:459.7px;font-size:9.5px;color:#e5e5e5;text-shadow:0 1px 1px rgba(0,0,0,.55);">IOR</div><div class="t" style="right:522px;top:459.7px;font-size:9.5px;color:#e5e5e5;text-shadow:0 1px 1px rgba(0,0,0,.55);">1.450</div><div class="sk" style="left:1213.30px;top:460.50px;width:7.0px;height:7.0px;background:#a1a1a1"></div><div class="nf" style="left:1228px;top:477px;width:177px;height:13px;background:#4772b3;border-radius:0 0 2px 2px"></div><div class="t" style="left:1240px;top:477.7px;font-size:9.5px;color:#e5e5e5;text-shadow:0 1px 1px rgba(0,0,0,.55);">Alpha</div><div class="t" style="right:522px;top:477.7px;font-size:9.5px;color:#e5e5e5;text-shadow:0 1px 1px rgba(0,0,0,.55);">1.000</div><div class="sk" style="left:1213.30px;top:478.50px;width:7.0px;height:7.0px;background:#a1a1a1"></div><div class="t" style="left:1228px;top:495.2px;font-size:9.5px;color:#e5e5e5;text-shadow:0 1px 1px rgba(0,0,0,.55);">Normal</div><div class="sk" style="left:1213.30px;top:496.50px;width:7.0px;height:7.0px;background:#6363c7"></div><div class="t" style="left:1240px;top:511.8px;font-size:9.5px;color:#e5e5e5;text-shadow:0 1px 1px rgba(0,0,0,.55);">Subsurface</div><div class="t" style="left:1240px;top:528.3px;font-size:9.5px;color:#e5e5e5;text-shadow:0 1px 1px rgba(0,0,0,.55);">Specular</div><div class="t" style="left:1240px;top:544.7px;font-size:9.5px;color:#e5e5e5;text-shadow:0 1px 1px rgba(0,0,0,.55);">Transmission</div><div class="t" style="left:1240px;top:561.2px;font-size:9.5px;color:#e5e5e5;text-shadow:0 1px 1px rgba(0,0,0,.55);">Coat</div><div class="t" style="left:1240px;top:577.6px;font-size:9.5px;color:#e5e5e5;text-shadow:0 1px 1px rgba(0,0,0,.55);">Sheen</div><div class="t" style="left:1240px;top:594.1px;font-size:9.5px;color:#e5e5e5;text-shadow:0 1px 1px rgba(0,0,0,.55);">Emission</div><div class="nd" style="left:1749px;top:363px;width:113px;height:94px;"><div class="hd" style="height:16px;background:#3d1d25"></div></div><div class="t" style="left:1770.2px;top:364.6px;font-size:9.5px;color:#e5e5e5;text-shadow:0 1px 1px rgba(0,0,0,.55);">Material Output</div><div class="dd" style="left:1756.3px;top:381px;width:98.4px;height:16.6px;"></div><div class="t" style="left:1763.3px;top:383.5px;font-size:9.5px;color:#e5e5e5;text-shadow:0 1px 1px rgba(0,0,0,.55);">All</div><div class="t" style="left:1758px;top:401.8px;font-size:9.5px;color:#e5e5e5;text-shadow:0 1px 1px rgba(0,0,0,.55);">Surface</div><div class="sk" style="left:1743.60px;top:403.10px;width:7.0px;height:7.0px;background:#63c763"></div><div class="t" style="left:1758px;top:419.8px;font-size:9.5px;color:#e5e5e5;text-shadow:0 1px 1px rgba(0,0,0,.55);">Volume</div><div class="sk" style="left:1743.60px;top:421.10px;width:7.0px;height:7.0px;background:#63c763"></div><div class="t" style="left:1758px;top:437.8px;font-size:9.5px;color:#e5e5e5;text-shadow:0 1px 1px rgba(0,0,0,.55);">Displacement</div><div class="sk" style="left:1743.60px;top:439.10px;width:7.0px;height:7.0px;background:#6363c7"></div><div class="nd" style="left:929.6px;top:793.6px;width:115.2px;height:136.2px;outline:1.4px solid #f2f2f2;outline-offset:-0.6px;"><div class="hd" style="height:16px;background:#3c3c84"></div></div><div class="t" style="left:950.8000000000001px;top:795.2px;font-size:9.5px;color:#e5e5e5;text-shadow:0 1px 1px rgba(0,0,0,.55);">Displacement</div><div class="t" style="right:881px;top:815.9px;font-size:9.5px;color:#e5e5e5;text-shadow:0 1px 1px rgba(0,0,0,.55);">Displacement</div><div class="sk" style="left:1040.50px;top:817.20px;width:7.0px;height:7.0px;background:#6363c7"></div><div class="dd" style="left:938.6px;top:836.6px;width:96.4px;height:16.3px;"></div><div class="t" style="left:945.6px;top:839.0px;font-size:9.5px;color:#e5e5e5;text-shadow:0 1px 1px rgba(0,0,0,.55);">Object Space</div><div class="t" style="left:940px;top:857.0px;font-size:9.5px;color:#e5e5e5;text-shadow:0 1px 1px rgba(0,0,0,.55);">Height</div><div class="sk" style="left:925.00px;top:858.30px;width:7.0px;height:7.0px;background:#a1a1a1"></div><div class="grp" style="left:938px;top:873.5px;width:97.5px;height:33px"></div><div class="nf" style="left:939.5px;top:874.8px;width:95px;height:12.8px;background:#545454;border-radius:2px 2px 0 0"></div><div class="t" style="left:951.5px;top:875.4px;font-size:9.5px;color:#e5e5e5;text-shadow:0 1px 1px rgba(0,0,0,.55);">Midlevel</div><div class="t" style="right:891.5px;top:875.4px;font-size:9.5px;color:#e5e5e5;text-shadow:0 1px 1px rgba(0,0,0,.55);">0.500</div><div class="sk" style="left:925.00px;top:876.50px;width:7.0px;height:7.0px;background:#a1a1a1"></div><div class="nf" style="left:939.5px;top:892.6px;width:95px;height:12.8px;background:#545454;border-radius:0 0 2px 2px"></div><div class="t" style="left:951.5px;top:893.2px;font-size:9.5px;color:#e5e5e5;text-shadow:0 1px 1px rgba(0,0,0,.55);">Scale</div><div class="t" style="right:891.5px;top:893.2px;font-size:9.5px;color:#e5e5e5;text-shadow:0 1px 1px rgba(0,0,0,.55);">0.025</div><div class="sk" style="left:925.00px;top:894.50px;width:7.0px;height:7.0px;background:#a1a1a1"></div><div class="t" style="left:940px;top:910.9px;font-size:9.5px;color:#e5e5e5;text-shadow:0 1px 1px rgba(0,0,0,.55);">Normal</div><div class="sk" style="left:925.00px;top:912.20px;width:7.0px;height:7.0px;background:#6363c7"></div></div>
<svg width="1914" height="1118"><polyline points="97.5,530.0 101.0,533.5 104.5,530.0" fill="none" stroke="#d8d8d8" stroke-width="1.1" /><g fill="none" stroke="#c8c8c8" stroke-width="1" stroke-linecap="butt"><path d="M136.6,677.6 L134.5,677.6 L134.5,679.8 M143.4,677.6 L145.5,677.6 L145.5,679.8 M134.5,686.2 L134.5,688.4 L136.6,688.4 M145.5,686.2 L145.5,688.4 L143.4,688.4"/></g><rect x="136.3" y="679.9" width="6.9" height="6.3" fill="#ececec" stroke="#141414" stroke-width="0.8"/><path d="M181.2,687.6 L186.4,682.4" stroke="#bdbdbd" stroke-width="2.2" stroke-linecap="round"/><path d="M181.9,686.9 L185.9,682.9" stroke="#1e1e1e" stroke-width="0.8"/><path d="M186.2,680.2 L189.2,677.2 C190.4,676 192.3,677.9 191.1,679.1 L188.1,682.1 Z" fill="#c4c4c4"/><path d="M184.2,679.4 L189,684.2" stroke="#c4c4c4" stroke-width="1.3"/><polyline points="324.5,514.0 328.0,517.5 331.5,514.0" fill="none" stroke="#d8d8d8" stroke-width="1.1" /><polyline points="413.3,558.1 416.0,560.9 418.7,558.1" fill="none" stroke="#d0d0d0" stroke-width="1" /><polyline points="612.5,118.0 616.0,121.5 619.5,118.0" fill="none" stroke="#d8d8d8" stroke-width="1.1" /><path d="M615.50,185.50 L615.50,175.40 L626.20,175.40" fill="none" stroke="#e8e8e8" stroke-width="1.2"/><path d="M626.20,175.40 L626.20,185.50 L615.50,185.50" fill="none" stroke="#8a8a8a" stroke-width="1.2"/><path d="M615.00,186.10 L618.80,180.00 L622.40,186.10 Z" fill="#ececec"/><circle cx="622.80" cy="178.60" r="1.25" fill="#f0f0f0"/><polyline points="629.10,180.40 631.50,182.70 633.80,179.60" fill="none" stroke="#d8d8d8" stroke-width="1"/><path d="M733.00,175.20 C731.50,176.30 730.00,176.60 728.30,176.60 L728.30,180.50 C728.30,183.00 730.50,184.80 733.00,186.00 C735.50,184.80 737.70,183.00 737.70,180.50 L737.70,176.60 C736.00,176.60 734.50,176.30 733.00,175.20 Z" fill="none" stroke="#9c9c9c" stroke-width="1"/><path d="M746.30,178.20 L744.60,178.20 L744.60,185.50 L752.40,185.50 L752.40,184.20" fill="none" stroke="#c8c8c8" stroke-width="1.1"/><path d="M755.40,179.20 L755.40,182.50 L748.20,182.50 L748.20,175.60 L752.40,175.60" fill="none" stroke="#ececec" stroke-width="1.1"/><path d="M752.20,175.10 L755.90,178.10 L752.20,178.10 Z" fill="#ececec"/><rect x="760.00" y="176.20" width="4.6" height="1.4" fill="#e8e8e8"/><rect x="760.00" y="177.30" width="11.8" height="1.6" fill="#e8e8e8"/><rect x="760.00" y="180.20" width="11.8" height="5.5" fill="#e8e8e8"/><path d="M778.90,177.20 L786.00,184.10 M786.00,177.20 L778.90,184.10" stroke="#d8d8d8" stroke-width="1.1"/><polyline points="783.8,199.8 786.5,202.5 789.2,199.8" fill="none" stroke="#d0d0d0" stroke-width="1" /><polyline points="783.8,220.1 786.5,222.8 789.2,220.1" fill="none" stroke="#d0d0d0" stroke-width="1" /><polyline points="783.8,240.3 786.5,243.0 789.2,240.3" fill="none" stroke="#d0d0d0" stroke-width="1" /><polyline points="783.8,260.6 786.5,263.3 789.2,260.6" fill="none" stroke="#d0d0d0" stroke-width="1" /><polyline points="783.8,282.0 786.5,284.8 789.2,282.0" fill="none" stroke="#d0d0d0" stroke-width="1" /><polyline points="783.8,302.1 786.5,304.8 789.2,302.1" fill="none" stroke="#d0d0d0" stroke-width="1" /><polyline points="613.0,476.1 616.5,479.6 620.0,476.1" fill="none" stroke="#d8d8d8" stroke-width="1.1" /><path d="M616.00,543.70 L616.00,533.60 L626.70,533.60" fill="none" stroke="#e8e8e8" stroke-width="1.2"/><path d="M626.70,533.60 L626.70,543.70 L616.00,543.70" fill="none" stroke="#8a8a8a" stroke-width="1.2"/><path d="M615.50,544.30 L619.30,538.20 L622.90,544.30 Z" fill="#ececec"/><circle cx="623.30" cy="536.80" r="1.25" fill="#f0f0f0"/><polyline points="629.60,538.60 632.00,540.90 634.30,537.80" fill="none" stroke="#d8d8d8" stroke-width="1"/><path d="M733.50,533.40 C732.00,534.50 730.50,534.80 728.80,534.80 L728.80,538.70 C728.80,541.20 731.00,543.00 733.50,544.20 C736.00,543.00 738.20,541.20 738.20,538.70 L738.20,534.80 C736.50,534.80 735.00,534.50 733.50,533.40 Z" fill="none" stroke="#9c9c9c" stroke-width="1"/><path d="M746.80,536.40 L745.10,536.40 L745.10,543.70 L752.90,543.70 L752.90,542.40" fill="none" stroke="#c8c8c8" stroke-width="1.1"/><path d="M755.90,537.40 L755.90,540.70 L748.70,540.70 L748.70,533.80 L752.90,533.80" fill="none" stroke="#ececec" stroke-width="1.1"/><path d="M752.70,533.30 L756.40,536.30 L752.70,536.30 Z" fill="#ececec"/><rect x="760.50" y="534.40" width="4.6" height="1.4" fill="#e8e8e8"/><rect x="760.50" y="535.50" width="11.8" height="1.6" fill="#e8e8e8"/><rect x="760.50" y="538.40" width="11.8" height="5.5" fill="#e8e8e8"/><path d="M779.40,535.40 L786.50,542.30 M786.50,535.40 L779.40,542.30" stroke="#d8d8d8" stroke-width="1.1"/><polyline points="784.3,558.1 787.0,560.8 789.7,558.1" fill="none" stroke="#d0d0d0" stroke-width="1" /><polyline points="784.3,578.3 787.0,581.0 789.7,578.3" fill="none" stroke="#d0d0d0" stroke-width="1" /><polyline points="784.3,598.6 787.0,601.3 789.7,598.6" fill="none" stroke="#d0d0d0" stroke-width="1" /><polyline points="784.3,618.8 787.0,621.5 789.7,618.8" fill="none" stroke="#d0d0d0" stroke-width="1" /><polyline points="784.3,640.2 787.0,643.0 789.7,640.2" fill="none" stroke="#d0d0d0" stroke-width="1" /><polyline points="784.3,660.4 787.0,663.1 789.7,660.4" fill="none" stroke="#777" stroke-width="1" /><polyline points="613.5,828.6 617.0,832.1 620.5,828.6" fill="none" stroke="#d8d8d8" stroke-width="1.1" /><path d="M616.50,896.10 L616.50,886.00 L627.20,886.00" fill="none" stroke="#e8e8e8" stroke-width="1.2"/><path d="M627.20,886.00 L627.20,896.10 L616.50,896.10" fill="none" stroke="#8a8a8a" stroke-width="1.2"/><path d="M616.00,896.70 L619.80,890.60 L623.40,896.70 Z" fill="#ececec"/><circle cx="623.80" cy="889.20" r="1.25" fill="#f0f0f0"/><polyline points="630.10,891.00 632.50,893.30 634.80,890.20" fill="none" stroke="#d8d8d8" stroke-width="1"/><path d="M734.00,885.80 C732.50,886.90 731.00,887.20 729.30,887.20 L729.30,891.10 C729.30,893.60 731.50,895.40 734.00,896.60 C736.50,895.40 738.70,893.60 738.70,891.10 L738.70,887.20 C737.00,887.20 735.50,886.90 734.00,885.80 Z" fill="none" stroke="#9c9c9c" stroke-width="1"/><path d="M747.30,888.80 L745.60,888.80 L745.60,896.10 L753.40,896.10 L753.40,894.80" fill="none" stroke="#c8c8c8" stroke-width="1.1"/><path d="M756.40,889.80 L756.40,893.10 L749.20,893.10 L749.20,886.20 L753.40,886.20" fill="none" stroke="#ececec" stroke-width="1.1"/><path d="M753.20,885.70 L756.90,888.70 L753.20,888.70 Z" fill="#ececec"/><rect x="761.00" y="886.80" width="4.6" height="1.4" fill="#e8e8e8"/><rect x="761.00" y="887.90" width="11.8" height="1.6" fill="#e8e8e8"/><rect x="761.00" y="890.80" width="11.8" height="5.5" fill="#e8e8e8"/><path d="M779.90,887.80 L787.00,894.70 M787.00,887.80 L779.90,894.70" stroke="#d8d8d8" stroke-width="1.1"/><polyline points="784.8,910.5 787.5,913.2 790.2,910.5" fill="none" stroke="#d0d0d0" stroke-width="1" /><polyline points="784.8,930.7 787.5,933.4 790.2,930.7" fill="none" stroke="#d0d0d0" stroke-width="1" /><polyline points="784.8,951.0 787.5,953.7 790.2,951.0" fill="none" stroke="#d0d0d0" stroke-width="1" /><polyline points="784.8,971.2 787.5,973.9 790.2,971.2" fill="none" stroke="#d0d0d0" stroke-width="1" /><polyline points="784.8,992.7 787.5,995.4 790.2,992.7" fill="none" stroke="#d0d0d0" stroke-width="1" /><polyline points="784.8,1012.8 787.5,1015.5 790.2,1012.8" fill="none" stroke="#777" stroke-width="1" /><polyline points="1227.5,370.9 1231.0,374.4 1234.5,370.9" fill="none" stroke="#d8d8d8" stroke-width="1.1" /><polyline points="1230.2,514.1 1233.8,517.9 1230.2,521.7" fill="none" stroke="#bdbdbd" stroke-width="1.2" /><polyline points="1230.2,530.6 1233.8,534.4 1230.2,538.1" fill="none" stroke="#bdbdbd" stroke-width="1.2" /><polyline points="1230.2,547.0 1233.8,550.8 1230.2,554.6" fill="none" stroke="#bdbdbd" stroke-width="1.2" /><polyline points="1230.2,563.5 1233.8,567.2 1230.2,571.0" fill="none" stroke="#bdbdbd" stroke-width="1.2" /><polyline points="1230.2,579.9 1233.8,583.7 1230.2,587.5" fill="none" stroke="#bdbdbd" stroke-width="1.2" /><polyline points="1230.2,596.4 1233.8,600.1 1230.2,603.9" fill="none" stroke="#bdbdbd" stroke-width="1.2" /><polyline points="1757.5,368.9 1761.0,372.4 1764.5,368.9" fill="none" stroke="#d8d8d8" stroke-width="1.1" /><polyline points="1846.8,388.1 1849.5,390.9 1852.2,388.1" fill="none" stroke="#d0d0d0" stroke-width="1" /><polyline points="938.1,799.6 941.6,803.1 945.1,799.6" fill="none" stroke="#d8d8d8" stroke-width="1.1" /><polyline points="1027.1,843.6 1029.8,846.3 1032.5,843.6" fill="none" stroke="#d0d0d0" stroke-width="1" /></svg>
</body></html>
